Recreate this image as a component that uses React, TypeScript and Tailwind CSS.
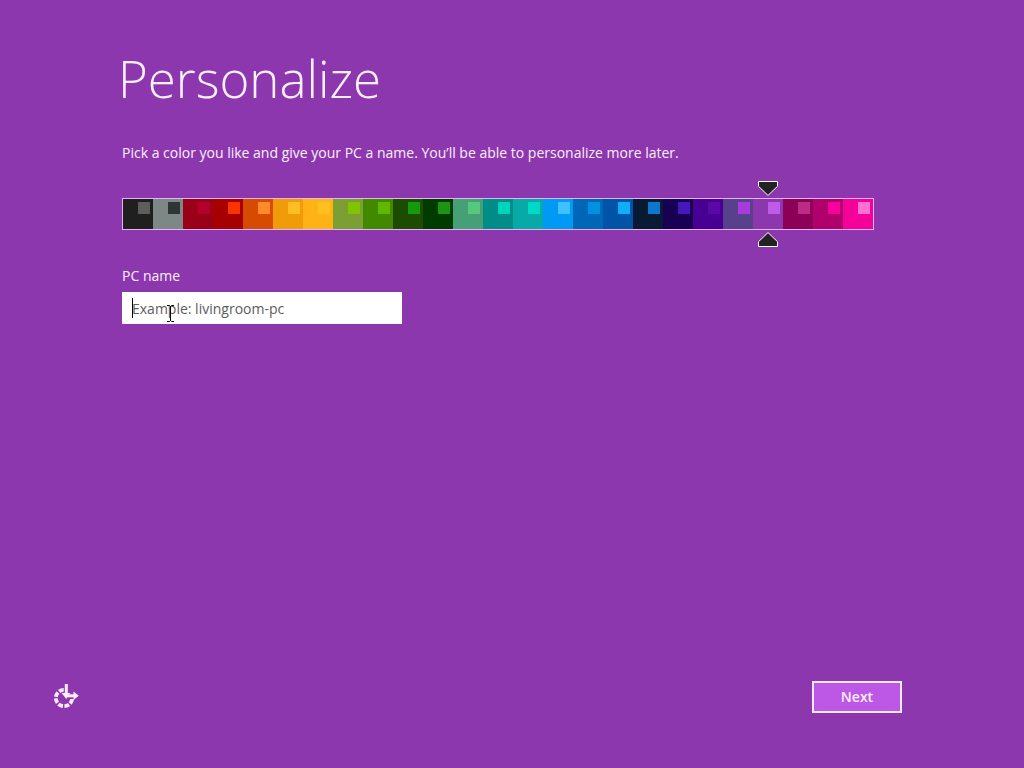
import { useState } from 'react';

const swatches = [
  { name: 'Charcoal', base: 'bg-[#1f1f1f]', accent: 'bg-[#5a5f5c]' },
  { name: 'Gray', base: 'bg-[#7d8785]', accent: 'bg-[#2f3434]' },
  { name: 'Crimson', base: 'bg-[#9b0019]', accent: 'bg-[#b4002d]' },
  { name: 'Red', base: 'bg-[#a60000]', accent: 'bg-[#f93402]' },
  { name: 'Rust', base: 'bg-[#d64a02]', accent: 'bg-[#ff8a2c]' },
  { name: 'Amber', base: 'bg-[#f09c08]', accent: 'bg-[#ffbd26]' },
  { name: 'Yellow', base: 'bg-[#ffb216]', accent: 'bg-[#ffc020]' },
  { name: 'Olive', base: 'bg-[#7b9f33]', accent: 'bg-[#80c400]' },
  { name: 'Green', base: 'bg-[#418a00]', accent: 'bg-[#62b800]' },
  { name: 'Forest', base: 'bg-[#1c4c00]', accent: 'bg-[#159a0c]' },
  { name: 'Dark green', base: 'bg-[#003c00]', accent: 'bg-[#1c9414]' },
  { name: 'Sea green', base: 'bg-[#45a078]', accent: 'bg-[#56c87c]' },
  { name: 'Teal', base: 'bg-[#008d88]', accent: 'bg-[#00d4bc]' },
  { name: 'Turquoise', base: 'bg-[#08aaa8]', accent: 'bg-[#00d8c8]' },
  { name: 'Sky', base: 'bg-[#009af4]', accent: 'bg-[#40c0ff]' },
  { name: 'Blue', base: 'bg-[#0066b8]', accent: 'bg-[#0090e0]' },
  { name: 'Cobalt', base: 'bg-[#0054a8]', accent: 'bg-[#10aef8]' },
  { name: 'Navy', base: 'bg-[#091a34]', accent: 'bg-[#0c78cc]' },
  { name: 'Midnight', base: 'bg-[#180052]', accent: 'bg-[#4418bc]' },
  { name: 'Indigo', base: 'bg-[#480094]', accent: 'bg-[#5a08a8]' },
  { name: 'Slate', base: 'bg-[#57408c]', accent: 'bg-[#a63cdc]' },
  { name: 'Purple', base: 'bg-[#8c37ad]', accent: 'bg-[#bd5ce8]' },
  { name: 'Plum', base: 'bg-[#8c0058]', accent: 'bg-[#bc2c84]' },
  { name: 'Magenta', base: 'bg-[#b0006c]', accent: 'bg-[#f8009c]' },
  { name: 'Pink', base: 'bg-[#f6009a]', accent: 'bg-[#ff70d0]' },
];

const Marker = ({ className }: { className: string }) => (
  <svg className={className} width="20" height="15" viewBox="0 0 20 15" aria-hidden="true">
    <path d="M.5.5h19v4.8L10 14.4.5 5.3z" fill="#222" stroke="#fff" />
  </svg>
);

const EaseOfAccessIcon = () => (
  <svg width="28" height="28" viewBox="0 0 28 28" fill="none" stroke="#fcecff" aria-hidden="true">
    <circle cx="12" cy="15" r="8.2" strokeWidth="3.8" strokeDasharray="4.9 1.54" strokeDashoffset="-1" />
    <path d="M12.5 0v16H22V0z" fill="#8c37ad" stroke="none" />
    <path d="M14.3 1v12" strokeWidth="3" />
    <path d="M14.3 12.8h8" strokeWidth="3" />
    <path d="M9.5 10l4.8 6 4-6z" fill="#fcecff" stroke="none" />
    <path d="M21.5 8.6l5.2 4.2-5.2 4.2z" fill="#fcecff" stroke="none" />
  </svg>
);

const App = () => {
  const [selected, setSelected] = useState('Purple');
  const [pcName, setPcName] = useState('');

  return (
    <div className="flex min-h-screen flex-col bg-[#8c37ad] font-['Open_Sans','Noto_Sans',sans-serif] text-[#fdf0ff]">
      <main className="flex-1 px-[122px] pt-[39px]">
        <h1 className="-ml-1 text-[51px] leading-[78px] font-light">Personalize</h1>
        <p className="mt-6 text-sm leading-6">
          Pick a color you like and give your PC a name. You’ll be able to personalize more later.
        </p>

        {/* Color bar */}
        <div
          role="radiogroup"
          aria-label="Color"
          className="mt-[33px] flex w-full max-w-[752px] border border-[#e3b5f2]"
        >
          {swatches.map((swatch) => (
            <label
              key={swatch.name}
              className={`relative flex h-[30px] flex-1 items-start justify-end p-[3px] ${swatch.base}`}
            >
              <input
                type="radio"
                name="color"
                value={swatch.name}
                aria-label={swatch.name}
                checked={selected === swatch.name}
                onChange={() => setSelected(swatch.name)}
                className="sr-only"
              />
              <span className={`size-3 ${swatch.accent}`} />
              {selected === swatch.name && (
                <>
                  <Marker className="absolute bottom-full left-1/2 mb-[3px] -translate-x-1/2" />
                  <Marker className="absolute top-full left-1/2 mt-[3px] -translate-x-1/2 rotate-180" />
                </>
              )}
            </label>
          ))}
        </div>

        {/* PC name */}
        <label htmlFor="pc-name" className="mt-[34px] block text-sm leading-6">
          PC name
        </label>
        <div className="relative mt-1 w-full max-w-[280px]">
          <input
            id="pc-name"
            type="text"
            value={pcName}
            onChange={(e) => setPcName(e.target.value)}
            placeholder="Example: livingroom-pc"
            className="block h-8 w-full bg-white px-[10px] text-sm text-black caret-transparent outline-none placeholder:text-[#5c5c5c]"
          />
          <span className="absolute top-[6px] left-[10px] h-5 w-px bg-black" />
          <svg
            className="pointer-events-none absolute top-[13px] left-11"
            width="9"
            height="17"
            viewBox="0 0 9 17"
            fill="none"
            stroke="#000"
            aria-hidden="true"
          >
            <path d="M1 .5h2.5l1 1 1-1H8M4.5 1v15M1 16.5h2.5l1-1 1 1H8" />
          </svg>
        </div>
      </main>

      <footer className="flex items-center justify-between pr-[122px] pb-[55px] pl-[52px]">
        <button type="button" aria-label="Ease of access">
          <EaseOfAccessIcon />
        </button>
        <button
          type="button"
          className="h-8 w-[90px] border-2 border-[#fdeaff] bg-[#bd57e6] text-sm font-semibold"
        >
          Next
        </button>
      </footer>
    </div>
  );
};

export default App;
